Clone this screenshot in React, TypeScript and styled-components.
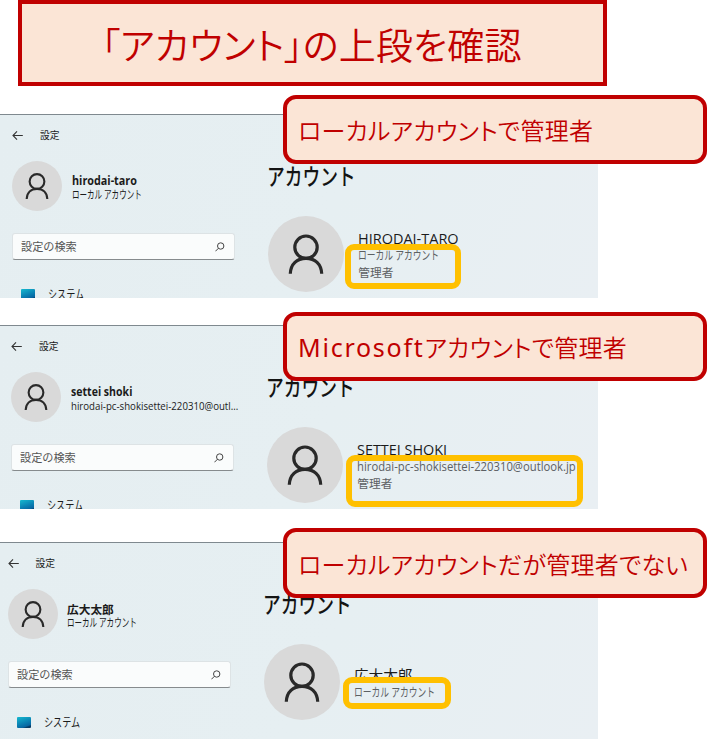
import React from "react";
import styled, { createGlobalStyle } from "styled-components";

const Global = createGlobalStyle`
  * { box-sizing: border-box; }
  body { margin: 0; background: #fff; overflow: hidden; }
`;

const jp = `"Noto Sans CJK JP", sans-serif`;
const latin = `"Open Sans", "Noto Sans CJK JP", sans-serif`;

const Page = styled.main`
  width: 707px;
  height: 739px;
  overflow: hidden;
  background: #fff;
  font-family: ${latin};
`;

const Title = styled.h1`
  width: 589px;
  height: 86px;
  margin: 0 0 28px 18px;
  padding-left: 79.5px;
  border: 4px solid #c00000;
  background: #fbe5d6;
  color: #c00000;
  font: 350 37px/80px ${jp};
  font-feature-settings: "palt";
  letter-spacing: 0.15px;
  white-space: nowrap;
`;

const Section = styled.section<{ $h: number }>`
  position: relative;
  height: ${(p) => p.$h}px;
  & + & { margin-top: 27px; }
  &:last-child { margin-top: 33px; }
`;

const Window = styled.div<{ $shift: number }>`
  display: flex;
  width: 598px;
  height: 100%;
  overflow: hidden;
  padding-left: ${(p) => 12 - p.$shift}px;
  border-top: 1px solid #7f898f;
  background: linear-gradient(115deg, #e5eef1 0%, #e6eff2 55%, #e9eff3 100%);
`;

const Sidebar = styled.div`
  flex: none;
  width: 256.3px;
`;

const Main = styled.div`
  flex: none;
  width: 330px;
  padding-top: 46px;
`;

const NavBar = styled.div`
  display: flex;
  align-items: center;
  gap: 17px;
  height: 41px;
`;

const Profile = styled.div`
  display: flex;
  align-items: center;
  gap: 9.5px;
  height: 50px;
  margin-top: 5px;
`;

const AccountRow = styled.div`
  display: flex;
  gap: 14px;
  margin-top: 26px;
`;

const AvatarCircle = styled.div<{ $size: number }>`
  flex: none;
  display: grid;
  place-items: center;
  width: ${(p) => p.$size}px;
  height: ${(p) => p.$size}px;
  border-radius: 50%;
  background: #d9d9d9;
  svg { width: 100%; height: 100%; }
`;

const Stack = styled.div<{ $top?: number }>`
  display: flex;
  flex-direction: column;
  align-items: flex-start;
  padding-top: ${(p) => p.$top ?? 0}px;
`;

const Text = styled.span<{ $size: number; $line: number; $stretch?: number; $weight?: number; $color?: string }>`
  display: block;
  color: ${(p) => p.$color ?? "#1b1b1b"};
  font-size: ${(p) => p.$size}px;
  font-weight: ${(p) => p.$weight ?? 400};
  line-height: ${(p) => p.$line}px;
  white-space: nowrap;
  transform: scaleX(${(p) => p.$stretch ?? 1});
  transform-origin: 0 50%;
`;

const Heading = styled.h2`
  margin: 0;
  color: #141414;
  font: 500 23px/29px ${jp};
  white-space: nowrap;
  transform: translateX(-1px) scaleX(0.77);
  transform-origin: 0 50%;
`;

const Search = styled.div`
  display: flex;
  align-items: center;
  justify-content: space-between;
  width: 223px;
  height: 27px;
  margin-top: 22px;
  padding: 0 9px 0 8px;
  border: 1px solid #dde3e5;
  border-bottom-color: #868b8d;
  border-radius: 3px;
  background: #fafcfc;
`;

const MenuItem = styled.div`
  display: flex;
  align-items: flex-start;
  gap: 13px;
  margin: 26px 0 0 9px;
`;

const SystemIcon = styled.i`
  width: 14px;
  height: 11px;
  margin-top: 2.5px;
  border-radius: 1px;
  background: linear-gradient(160deg, #16b9cf 0%, #0a83b4 50%, #0766a2 78%, #083c66 86%);
`;

const Callout = styled.div<{ $top: number; $h: number }>`
  position: absolute;
  left: 283px;
  top: ${(p) => p.$top}px;
  width: 424px;
  height: ${(p) => p.$h}px;
  padding-left: 11px;
  border: 4px solid #c00000;
  border-radius: 13px;
  background: #fbe5d6;
  color: #c00000;
  font: 350 24px/${(p) => p.$h - 7}px ${jp};
  font-feature-settings: "palt";
  letter-spacing: 0.25px;
  white-space: nowrap;
`;

const Brand = styled.span`
  font-family: "Noto Sans", sans-serif;
  font-size: 25px;
  font-weight: 400;
  letter-spacing: 1.75px;
`;

const Highlight = styled.div<{ $x: number; $y: number; $w: number; $h: number }>`
  position: absolute;
  left: ${(p) => p.$x}px;
  top: ${(p) => p.$y}px;
  width: ${(p) => p.$w}px;
  height: ${(p) => p.$h}px;
  border: 6px solid #ffc000;
  border-radius: 9px;
`;

const Avatar = ({ size }: { size: number }) => (
  <AvatarCircle $size={size}>
    <svg viewBox="0 0 76 76" fill="none" stroke="#292929" strokeWidth="3.2">
      <circle cx="38" cy="31.2" r="11.2" />
      <path d="M22.3 57.8C22.7 48 29 42.4 38 42.4S53.3 48 53.7 57.8" />
    </svg>
  </AvatarCircle>
);

const BackIcon = () => (
  <svg width="11" height="11" viewBox="0 0 11 11" fill="none" stroke="#333" strokeWidth="1.1">
    <path d="M5 1.3L1 5.5L5 9.7M1 5.5H10.8" />
  </svg>
);

const SearchIcon = () => (
  <svg width="10" height="10" viewBox="0 0 10 10" fill="none" stroke="#444" strokeWidth="1">
    <circle cx="5.7" cy="4" r="3.2" />
    <path d="M3.4 6.3L.4 9.3" />
  </svg>
);

type Line = { text: string; size: number; stretch: number; weight?: number };
type Account = {
  height: number;
  shift: number;
  brand?: string;
  callout: string;
  calloutTop: number;
  calloutHeight: number;
  side: [Line, Line];
  main: Line[];
  mainTop: number;
  mark: [number, number, number, number];
};

const local: Line = { text: "ローカル アカウント", size: 11.5, stretch: 0.655 };
const admin: Line = { text: "管理者", size: 11.7, stretch: 1 };

const accounts: Account[] = [
  {
    height: 184, shift: 0, callout: "ローカルアカウントで管理者", calloutTop: -19, calloutHeight: 69,
    side: [{ text: "hirodai-taro", size: 12, stretch: 0.9, weight: 700 }, local],
    main: [{ text: "HIRODAI-TARO", size: 15, stretch: 0.965 }, { ...local, size: 12, stretch: 0.73 }, admin],
    mainTop: 13,
    mark: [345, 130, 116, 45],
  },
  {
    height: 184, shift: 1, brand: "Microsoft", callout: "アカウントで管理者", calloutTop: -13, calloutHeight: 69,
    side: [
      { text: "settei shoki", size: 12, stretch: 0.88, weight: 700 },
      { text: "hirodai-pc-shokisettei-220310@outl...", size: 10.5, stretch: 0.92 },
    ],
    main: [
      { text: "SETTEI SHOKI", size: 15, stretch: 0.96 },
      { text: "hirodai-pc-shokisettei-220310@outlook.jp", size: 12, stretch: 0.94 },
      admin,
    ],
    mainTop: 13,
    mark: [346, 130, 237, 52],
  },
  {
    height: 197, shift: 4.5, callout: "ローカルアカウントだが管理者でない", calloutTop: -14, calloutHeight: 70,
    side: [{ text: "広大太郎", size: 11.7, stretch: 1, weight: 700 }, local],
    main: [{ text: "広大太郎", size: 14.7, stretch: 1 }, { ...local, size: 12, stretch: 0.73 }],
    mainTop: 21.5,
    mark: [343, 135, 108, 32],
  },
];

export default function App() {
  return (
    <Page>
      <Global />
      <Title>「アカウント」の上段を確認</Title>
      {accounts.map((a) => (
        <Section key={a.callout} $h={a.height}>
          <Window $shift={a.shift}>
            <Sidebar>
              <NavBar>
                <BackIcon />
                <Text $size={9.8} $line={14}>設定</Text>
              </NavBar>
              <Profile>
                <Avatar size={50} />
                <Stack $top={3}>
                  {a.side.map((l) => (
                    <Text key={l.text} $size={l.size} $line={14} $stretch={l.stretch} $weight={l.weight}>{l.text}</Text>
                  ))}
                </Stack>
              </Profile>
              <Search>
                <Text $size={11.5} $line={20} $stretch={0.97} $color="#555">設定の検索</Text>
                <SearchIcon />
              </Search>
              <MenuItem>
                <SystemIcon />
                <Text $size={12} $line={18} $stretch={0.76}>システム</Text>
              </MenuItem>
            </Sidebar>
            <Main>
              <Heading>アカウント</Heading>
              <AccountRow>
                <Avatar size={76} />
                <Stack $top={a.mainTop}>
                  {a.main.map((l, i) => (
                    <Text key={l.text} $size={l.size} $line={i ? 16 : 19} $stretch={l.stretch} $color={i ? "#5c6063" : "#1b1b1b"}>{l.text}</Text>
                  ))}
                </Stack>
              </AccountRow>
            </Main>
          </Window>
          <Highlight $x={a.mark[0]} $y={a.mark[1]} $w={a.mark[2]} $h={a.mark[3]} />
          <Callout $top={a.calloutTop} $h={a.calloutHeight}>
            {a.brand && <Brand>{a.brand}</Brand>}
            {a.callout}
          </Callout>
        </Section>
      ))}
    </Page>
  );
}
